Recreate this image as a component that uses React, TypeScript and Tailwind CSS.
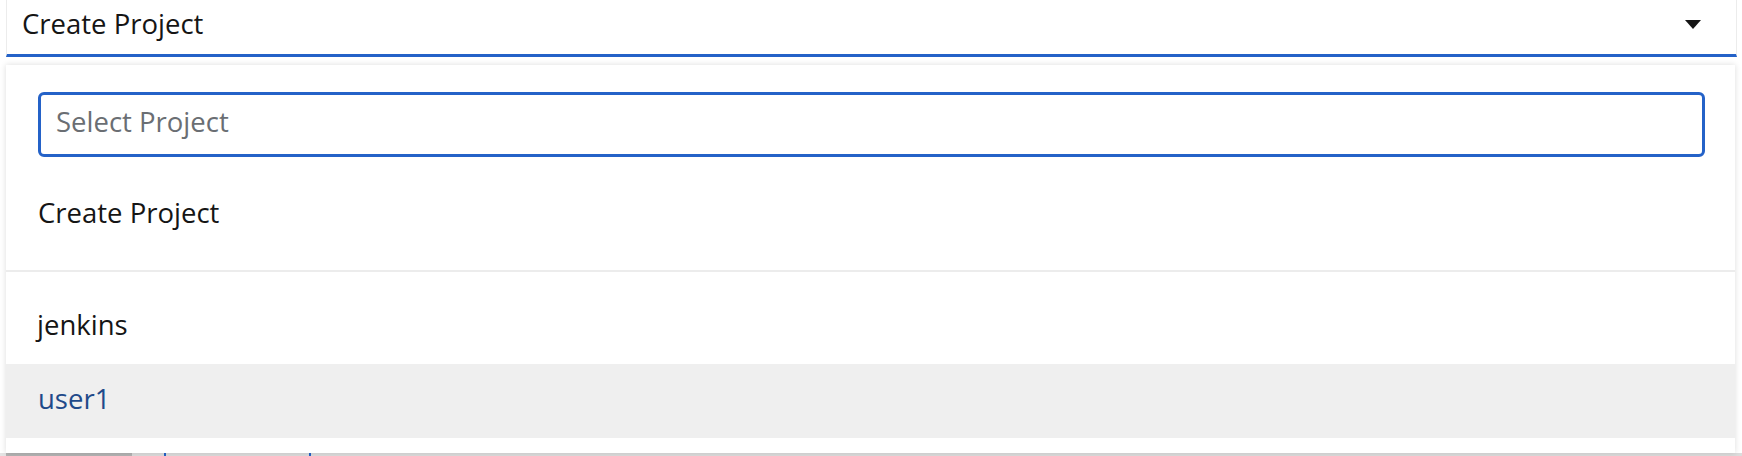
export default function App() {
  return (
    <div className="w-[1742px] h-[456px] bg-white overflow-hidden font-['Open_Sans',sans-serif] text-[#151515]">
      {/* Toggle */}
      <div className="ml-[6px] w-[1731px] h-[57px] border-x border-[#ececec] border-b-[3px] border-b-[#2462c8] flex items-center justify-between pl-[15px] pr-[35px]">
        <span className="text-[27.5px] leading-none mb-[6px]">Create Project</span>
        <svg width="16" height="9" viewBox="0 0 16 9" className="mb-[6px]">
          <path d="M0 0H16L8 9Z" fill="#151515" />
        </svg>
      </div>

      {/* Menu */}
      <div className="mt-[8px] ml-[6px] w-[1729px] h-[388px] bg-white shadow-[0_0_6px_rgba(0,0,0,0.14)] flex flex-col relative z-10">
        <div className="pt-[27px] pl-[32px] pr-[30px]">
          <div className="h-[65px] border-[3px] border-[#2462c8] rounded-[6px] flex items-center pl-[15px]">
            <span className="text-[27.5px] leading-none text-[#6a6e73] mb-[5px]">Select Project</span>
          </div>
        </div>
        <div className="mt-[21px] h-[74px] flex items-center pl-[32px]">
          <span className="text-[27.5px] leading-none mb-[5px]">Create Project</span>
        </div>
        <div className="mt-[18px] h-[2px] bg-[#ececec]" />
        <div className="mt-[19px] h-[73px] flex items-center pl-[31px]">
          <span className="text-[27.5px] leading-none mb-[6px]">jenkins</span>
        </div>
        <div className="h-[74px] flex items-center pl-[32px] bg-[#efefef]">
          <span className="text-[27.5px] leading-none text-[#1f4a8a] mb-[5px]">user1</span>
        </div>
      </div>

      {/* Content peeking below menu */}
      <div className="flex h-[3px]">
        <div className="w-[6px] bg-[#e4e4e4]" />
        <div className="w-[126px] bg-[#b3b3b3]" />
        <div className="w-[32px] bg-[#dcdcdc]" />
        <div className="w-[2px] bg-[#2462c8]" />
        <div className="w-[143px] bg-[#dcdcdc]" />
        <div className="w-[2px] bg-[#2462c8]" />
        <div className="flex-1 bg-[#dcdcdc]" />
      </div>
    </div>
  );
}
